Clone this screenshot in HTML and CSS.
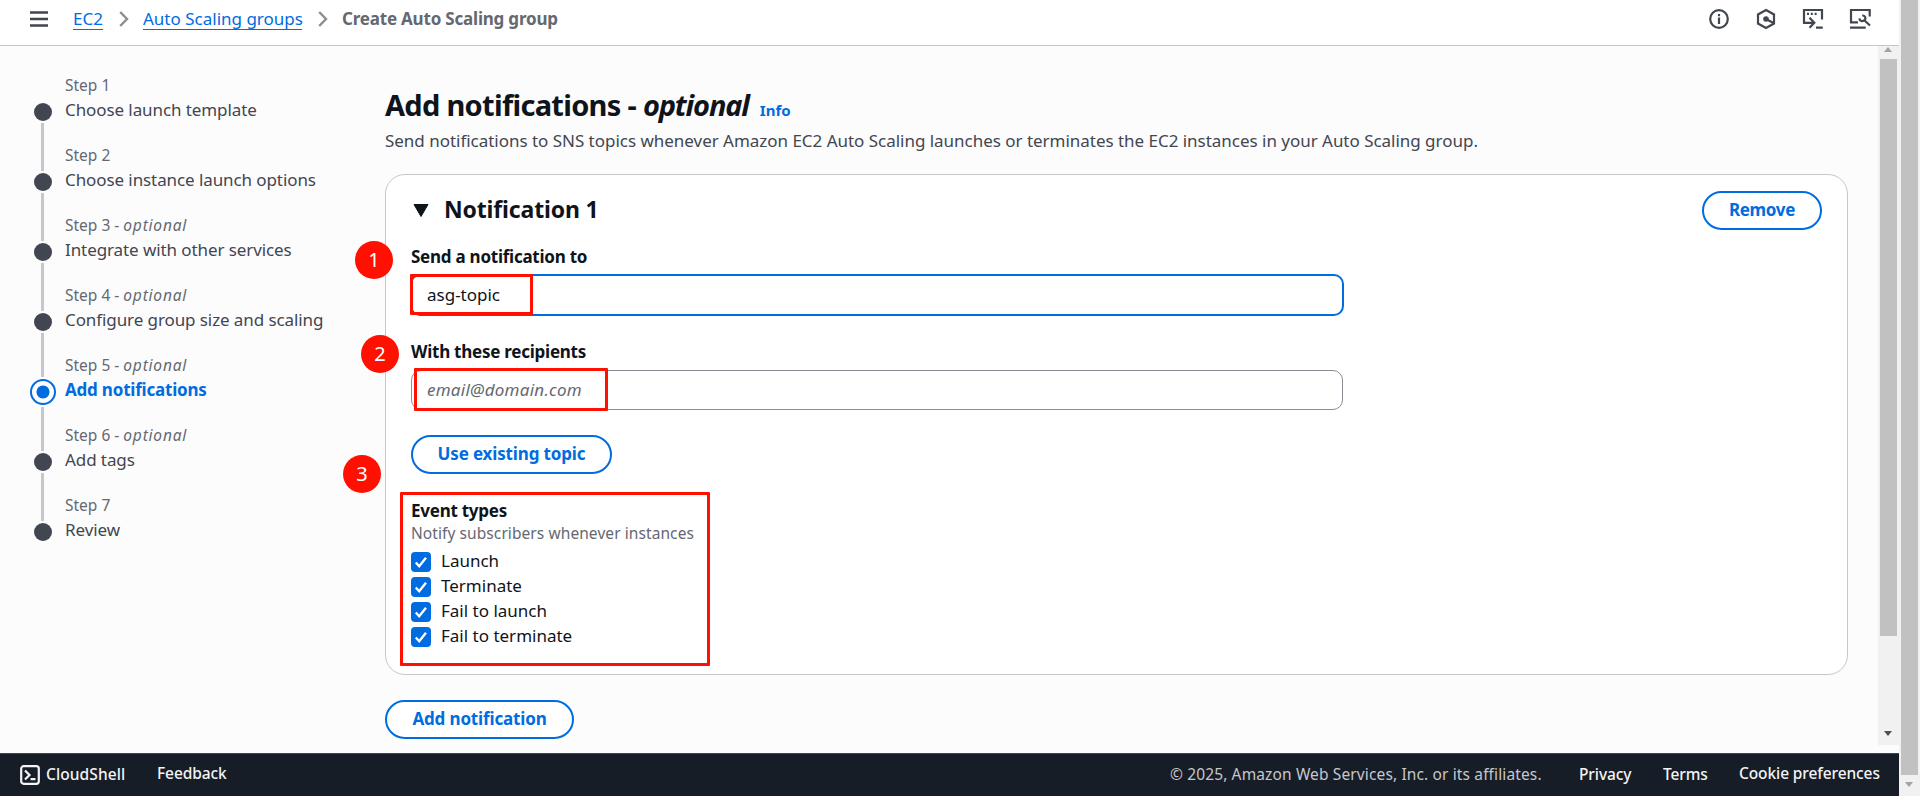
FILE: index.html
```html
<!DOCTYPE html>
<html lang="en">
<head>
<meta charset="utf-8">
<title>Create Auto Scaling group</title>
<link rel="stylesheet" href="styles.css">
</head>
<body>
<div class="app">
  <header class="topbar">
    <svg class="menu-icon" viewBox="0 0 18 16"><path d="M0 1.500h18M0 8h18M0 14.500h18"/></svg>
    <nav class="crumbs">
      <a class="crumb-ec2">EC2</a>
      <svg class="chevron" viewBox="0 0 10 16"><path d="M1.200 1 8 8l-6.800 7"/></svg>
      <a class="crumb-asg">Auto Scaling groups</a>
      <svg class="chevron" viewBox="0 0 10 16"><path d="M1.200 1 8 8l-6.800 7"/></svg>
      <span class="crumb-current">Create Auto Scaling group</span>
    </nav>
    <div class="tools">
      <svg viewBox="0 0 22 22"><circle cx="11" cy="11" r="8.800"/><path d="M11 9.500V16M11 6v2.200"/></svg>
      <svg viewBox="0 0 22 22"><path d="M11 2l8 4.500v9L11 20l-8-4.500v-9z"/><circle class="solid" cx="11" cy="11" r="2.800"/><path d="M11 11l7 3.800"/></svg>
      <svg viewBox="0 0 22 22"><path d="M2 15.500V2h18v9.500M1 14.800h10.500M7.500 9.800l4.800 5-4.800 5M14 19.700h6.800"/><path d="M5 5.800h2M8.800 5.800h2M12.600 5.800h2"/></svg>
      <svg viewBox="0 0 22 22"><path d="M9 14.300H2V2h18.700v6.500M1 19.700h15.700M15 12l6 5.500"/><path d="M13.200 7.500c2.800-.2 4.200 2.600 2.400 4.500s-5.100 1.200-5.200-1.600"/></svg>
    </div>
  </header>

  <div class="body">
    <aside class="steps">
      <div class="step"><i class="dot"></i><p class="num">Step 1</p><p class="name">Choose launch template</p></div>
      <div class="step"><i class="dot"></i><p class="num">Step 2</p><p class="name">Choose instance launch options</p></div>
      <div class="step"><i class="dot"></i><p class="num">Step 3 - <em>optional</em></p><p class="name">Integrate with other services</p></div>
      <div class="step before"><i class="dot"></i><p class="num">Step 4 - <em>optional</em></p><p class="name">Configure group size and scaling</p></div>
      <div class="step current"><i class="dot"></i><p class="num">Step 5 - <em>optional</em></p><p class="name">Add notifications</p></div>
      <div class="step"><i class="dot"></i><p class="num">Step 6 - <em>optional</em></p><p class="name">Add tags</p></div>
      <div class="step last"><i class="dot"></i><p class="num">Step 7</p><p class="name">Review</p></div>
    </aside>

    <main class="content">
      <div class="heading"><h1>Add notifications - <em>optional</em></h1><a class="info">Info</a></div>
      <p class="lead">Send notifications to SNS topics whenever Amazon EC2 Auto Scaling launches or terminates the EC2 instances in your Auto Scaling group.</p>

      <section class="card">
        <div class="card-head">
          <svg class="caret" viewBox="0 0 16 13"><path d="M1 .5h14L8 12.500z"/></svg>
          <h2>Notification 1</h2>
          <button class="btn remove">Remove</button>
        </div>
        <div class="field topic">
          <span class="badge">1</span>
          <label>Send a notification to</label>
          <div class="input focused"><span>asg-topic</span></div>
          <i class="mark"></i>
        </div>
        <div class="field mail">
          <span class="badge">2</span>
          <label>With these recipients</label>
          <div class="input"><span class="placeholder">email@domain.com</span></div>
          <i class="mark"></i>
        </div>
        <button class="btn existing">Use existing topic</button>
        <div class="field events">
          <span class="badge">3</span>
          <label>Event types</label>
          <p class="hint">Notify subscribers whenever instances</p>
          <div class="check"><svg viewBox="0 0 20 20"><path d="M4.800 10.500l3.400 3.700L15 5.800"/></svg><span>Launch</span></div>
          <div class="check"><svg viewBox="0 0 20 20"><path d="M4.800 10.500l3.400 3.700L15 5.800"/></svg><span>Terminate</span></div>
          <div class="check"><svg viewBox="0 0 20 20"><path d="M4.800 10.500l3.400 3.700L15 5.800"/></svg><span>Fail to launch</span></div>
          <div class="check"><svg viewBox="0 0 20 20"><path d="M4.800 10.500l3.400 3.700L15 5.800"/></svg><span>Fail to terminate</span></div>
          <i class="mark"></i>
        </div>
      </section>
      <button class="btn add">Add notification</button>
    </main>

    <div class="scroll inner"><i class="up"></i><i class="thumb"></i><i class="down"></i></div>
  </div>

  <footer class="footer">
    <svg class="shell" viewBox="0 0 20 20"><rect x="1.200" y="1.200" width="17.600" height="17.600" rx="2.500"/><path d="M5 5.500l4.500 4.500L5 14.500M10.500 14.200h5"/></svg>
    <a class="cs">CloudShell</a>
    <a class="fb">Feedback</a>
    <span class="copy">© 2025, Amazon Web Services, Inc. or its affiliates.</span>
    <a class="privacy">Privacy</a>
    <a class="terms">Terms</a>
    <a class="cookie">Cookie preferences</a>
  </footer>
</div>
<div class="scroll outer"><i class="thumb"></i><i class="down"></i></div>
</body>
</html>
```
FILE: styles.css
```css
* { box-sizing: border-box; }
html, body { margin: 0; height: 796px; overflow: hidden; }
body {
  display: flex;
  width: 1920px;
  background: #fcfcfd;
  color: #0f141a;
  font-family: "Noto Sans", "Open Sans", sans-serif;
  font-size: 17px;
  line-height: 24px;
  white-space: nowrap;
}
p, h1, h2 { margin: 0; font-weight: 400; }
svg { display: block; flex: none; fill: none; stroke: currentColor; stroke-width: 2; }
a, label, span { display: block; }
.app { display: flex; flex-direction: column; width: 1899px; height: 796px; }

.topbar { display: flex; align-items: flex-start; height: 46px; padding: 0 17px 0 30px; border-bottom: 1px solid #c6c6cd; background: #fff; color: #424650; }
.menu-icon { width: 18px; height: 16px; margin-top: 11px; stroke-width: 2.4; }
.crumbs { display: flex; margin-left: 25px; padding-top: 7px; }
.crumbs a { height: 23px; border-bottom: 1px solid #006ce0; color: #006ce0; }
.crumb-ec2 { width: 30px; }
.crumb-asg { width: 159px; }
.chevron { width: 10px; height: 16px; margin: 4px 14px 0 16px; color: #8c8c94; stroke-width: 2.4; }
.crumb-current { color: #656871; font-weight: 700; letter-spacing: -.2px; }
.tools { display: flex; gap: 25px; margin: 8px 0 0 auto; padding-right: 11px; }
.tools svg { width: 22px; height: 22px; stroke-width: 2.2; }
.tools .solid { fill: currentColor; stroke: none; }

.body { display: flex; height: 707px; }
.steps { width: 385px; padding: 28px 0 0 30px; }
.step { position: relative; height: 70px; padding-left: 35px; }
.step::after { content: ""; position: absolute; left: 11px; top: 49px; width: 3px; height: 48px; background: #c6c6cd; }
.step.last::after { display: none; }
.step.before::after { height: 44px; }
.step.current::after { top: 53px; height: 44px; }
.dot { position: absolute; left: 3.5px; top: 28.5px; width: 18px; height: 18px; border-radius: 50%; background: #424650; }
.current .dot { left: -.5px; top: 24.500px; width: 26px; height: 26px; border: 2.500px solid #006ce0; background: radial-gradient(circle, #006ce0 6.200px, transparent 6.800px); }
.num { color: #656871; font-size: 15.5px; line-height: 23px; }
.num em { letter-spacing: .8px; }
.name { color: #424650; line-height: 26px; letter-spacing: -.09px; }
.current .name { color: #006ce0; font-weight: 700; letter-spacing: -.2px; }

.content { width: 1493px; }
.heading { display: flex; align-items: baseline; gap: 11px; height: 56px; padding-top: 41px; }
h1 { font-size: 29px; line-height: 36px; font-weight: 700; letter-spacing: -.7px; }
h1 em { letter-spacing: -1.150px; }
.info { color: #006ce0; font-size: 15px; font-weight: 700; }
.lead { height: 72px; padding-top: 27px; color: #424650; letter-spacing: -.025px; }
.card { width: 1463px; height: 501px; padding: 16px 25px 0; border: 1px solid #c6c6cd; border-radius: 20px; background: #fff; }
.card-head { display: flex; height: 53px; }
.caret { width: 16px; height: 13px; margin: 13px 15px 0 2px; fill: currentColor; stroke-width: 1; stroke-linejoin: round; }
h2 { padding-top: 3px; font-size: 23px; line-height: 30px; font-weight: 700; letter-spacing: -.15px; }
.btn { display: flex; justify-content: center; height: 39px; padding: 5px 0 0; border: 2px solid #006ce0; border-radius: 20px; background: #fff; color: #006ce0; font: 700 17px/24px "Noto Sans", sans-serif; letter-spacing: -.15px; }
.remove { width: 120px; margin-left: auto; letter-spacing: -.3px; }
.field { position: relative; }
label { font-weight: 700; line-height: 25px; letter-spacing: -.25px; }
.topic { height: 95px; }
.mail { height: 96px; }
.input { display: flex; align-items: center; width: 932px; height: 40px; margin-top: 6px; border: 1px solid #8c8c94; border-radius: 10px; padding: 0 16px 1px 15px; }
.input.focused { width: 934px; height: 42px; margin: 5px 0 0 -1px; padding-bottom: 0; border: 2px solid #006ce0; }
.placeholder { color: #656871; font-style: italic; letter-spacing: .25px; }
.existing { width: 201px; }
.add { width: 189px; margin-top: 25px; }
.mark { position: absolute; border: 3px solid #ff1000; border-radius: 1px; }
.topic .mark { left: -1px; top: 30px; width: 123px; height: 41px; }
.mail .mark { left: 3px; top: 29px; width: 194px; height: 43px; }
.events { padding-top: 24px; }
.events .mark { left: -11px; top: 18px; width: 310px; height: 174px; }
.badge { position: absolute; width: 38px; height: 38px; border-radius: 50%; background: #ff1000; color: #fff; font-size: 20px; line-height: 38px; text-align: center; }
.topic .badge { left: -56px; top: -3px; }
.mail .badge { left: -50px; top: -4px; }
.events .badge { left: -68px; top: -19px; }
.hint { height: 29px; color: #656871; font-size: 15.5px; line-height: 21px; letter-spacing: .08px; }
.check { display: flex; height: 25px; gap: 10px; }
.check svg { width: 20px; height: 20px; border-radius: 4px; background: #006ce0; color: #fff; stroke-width: 2.400; }
.check span { margin-top: -3px; }

.scroll { position: relative; background: #f1f1f1; }
.inner { width: 21px; height: 699px; }
.outer { width: 21px; height: 796px; }
.thumb { position: absolute; left: 2px; width: 17px; background: #c1c1c1; }
.inner .thumb { top: 13px; height: 577px; }
.outer .thumb { top: 0; height: 775px; }
.up, .down { position: absolute; left: 6px; border: 4.500px solid transparent; }
.up { top: 1px; border-width: 0 4.500px 5px; border-bottom-color: #a3a3a3; }
.down { border-width: 5px 4.500px 0; border-top-color: #505050; }
.inner .down { top: 685px; }
.outer .down { top: 782px; border-top-color: #a3a3a3; }

.footer { display: flex; height: 43px; padding: 8px 20px 0; border-top: 1px solid #424650; background: #161d26; color: #f3f3f7; font-size: 15.5px; font-weight: 500; letter-spacing: -.1px; }
.shell { width: 20px; height: 20px; margin: 3px 6px 0 0; stroke-width: 2.200; }
.cs { width: 111px; letter-spacing: .1px; }
.fb, .cookie { margin-top: -1px; }
.copy { margin-left: auto; width: 409px; color: #c6c6cd; font-size: 15.5px; font-weight: 400; letter-spacing: .13px; }
.privacy { width: 84px; }
.terms { width: 76px; }
.cookie { width: 140px; }
```
